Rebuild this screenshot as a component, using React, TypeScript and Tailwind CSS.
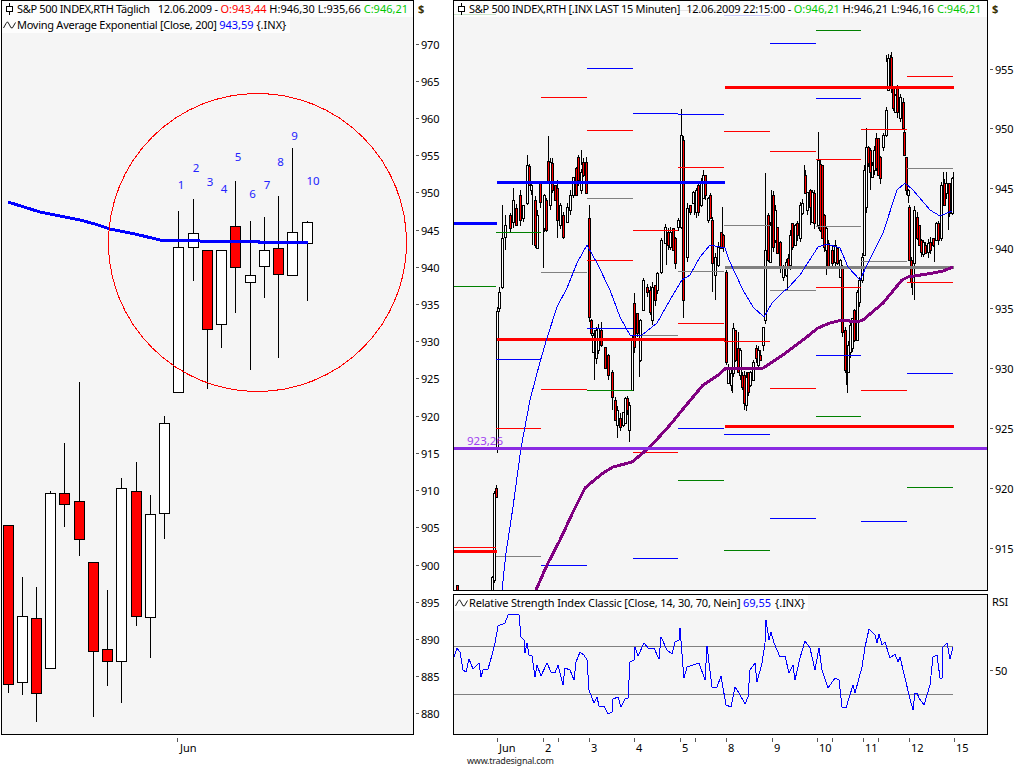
// S&P 500 daily and 15 minute charts, coordinates below are page pixels
type Candle = [number, number, number, number, number, 0 | 1];
type MiniBar = [number, number, number, 0 | 1];
type Pivot = [number, number, number, string, number?];

const RED = "#ff0000";
const BLUE = "#0000ff";
const GREEN = "#008000";
const GREY = "#808080";

// cx, wickTop, wickBottom, bodyTop, bodyBottom, red
const dailyCandles: Candle[] = [
  [8.5, 525, 693, 525, 684, 1],
  [22.5, 577, 695, 616, 682, 0],
  [36.5, 587, 722, 618, 693, 1],
  [50.5, 491, 668, 493, 668, 0],
  [64.5, 443, 527, 493, 504, 1],
  [79, 382, 556, 501, 539, 1],
  [93.5, 562, 717, 562, 651, 1],
  [107.5, 590, 686, 649, 661, 1],
  [121.5, 478, 703, 488, 661, 0],
  [136.5, 462, 626, 491, 616, 1],
  [150.5, 495, 658, 514, 617, 0],
  [164.5, 416, 539, 423, 513, 0],
  [178.5, 211, 392, 247, 392, 0],
  [193.5, 199, 281, 233, 247, 0],
  [207.5, 250, 389, 250, 329, 1],
  [221.5, 250, 348, 250, 324, 0],
  [235.5, 181, 313, 226, 267, 1],
  [250.5, 221, 370, 275, 282, 0],
  [264.5, 217, 298, 250, 266, 0],
  [278.5, 196, 358, 248, 274, 1],
  [292.5, 148, 275, 232, 275, 0],
  [307.5, 221, 301, 222, 243, 0],
];

const dailyNumbers: [string, number, number][] = [
  ["1", 181, 189],
  ["2", 196, 172],
  ["3", 210, 186],
  ["4", 224, 193],
  ["5", 238, 161],
  ["6", 252.5, 198],
  ["7", 267, 189],
  ["8", 280.5, 166],
  ["9", 294.5, 140],
  ["10", 313, 185],
];

const dailyEma = "8,202 24,207 40,212 60,216 80,220 95,224 110,229 135,234 160,240 200,241 258,241 259,242 308,242";

// x, bodyTop, bodyBottom, red
const bars: MiniBar[] = [
  [457, 585, 591, 1], [492, 577, 591, 0], [494, 493, 580, 0], [496, 488, 497, 1],
  [497, 311, 447, 0], [499, 292, 308, 0], [502, 238, 287, 0], [505, 225, 237, 0],
  [510, 215, 228, 1], [513, 200, 222, 0], [516, 208, 225, 1], [520, 195, 220, 1],
  [523, 205, 218, 0], [527, 165, 203, 0], [529, 166, 185, 1], [531, 185, 190, 0],
  [535, 200, 245, 1], [537, 215, 248, 0], [540, 183, 202, 1], [544, 195, 228, 0],
  [546, 200, 230, 1], [548, 161, 182, 1], [550, 162, 205, 0], [552, 163, 190, 1],
  [555, 185, 200, 1], [557, 188, 220, 1], [560, 205, 225, 0], [563, 215, 237, 1],
  [567, 207, 222, 0], [570, 195, 210, 0], [573, 177, 195, 0], [576, 168, 195, 1],
  [578, 157, 180, 1], [581, 172, 190, 0], [583, 162, 175, 1], [586, 162, 193, 1],
  [589, 218, 317, 1], [591, 320, 333, 1], [593, 335, 352, 0], [596, 330, 358, 0],
  [598, 328, 350, 0], [601, 330, 345, 1], [605, 347, 368, 1], [608, 355, 375, 1],
  [612, 372, 397, 1], [615, 400, 420, 1], [617, 410, 425, 0], [620, 418, 427, 1],
  [623, 412, 425, 0], [625, 398, 423, 0], [627, 398, 410, 1], [629, 405, 430, 0],
  [632, 340, 390, 0], [634, 303, 347, 1], [637, 313, 333, 1], [640, 320, 360, 0],
  [643, 280, 310, 0], [647, 287, 292, 1], [650, 290, 312, 1], [652, 287, 320, 0],
  [655, 285, 300, 1], [657, 273, 290, 0], [661, 240, 272, 0], [665, 227, 243, 0],
  [668, 232, 245, 1], [670, 232, 247, 0], [673, 228, 250, 1], [675, 238, 263, 1],
  [678, 220, 227, 0], [681, 135, 227, 0], [683, 140, 300, 1], [687, 208, 257, 0],
  [690, 205, 212, 1], [693, 192, 203, 0], [696, 190, 212, 0], [698, 185, 212, 1],
  [701, 182, 205, 0], [703, 175, 198, 0], [705, 175, 195, 1], [708, 198, 220, 0],
  [710, 195, 218, 1], [712, 220, 263, 1], [715, 257, 275, 0], [718, 247, 265, 0],
  [721, 232, 248, 1], [723, 235, 247, 1], [726, 272, 362, 1], [728, 367, 383, 0],
  [731, 373, 385, 0], [733, 328, 373, 0], [735, 330, 360, 1], [738, 348, 372, 1],
  [740, 350, 375, 0], [742, 375, 387, 1], [744, 375, 403, 1], [746, 377, 405, 0],
  [748, 372, 392, 1], [750, 372, 385, 0], [753, 362, 380, 0], [756, 348, 358, 1],
  [758, 350, 365, 0], [760, 355, 360, 1], [763, 327, 345, 0], [765, 250, 320, 0],
  [768, 215, 260, 1], [770, 225, 262, 0], [773, 195, 247, 1], [775, 210, 240, 0],
  [777, 227, 253, 1], [780, 242, 267, 1], [783, 267, 277, 0], [786, 262, 275, 0],
  [788, 258, 267, 1], [790, 235, 265, 0], [792, 223, 247, 1], [795, 225, 245, 0],
  [797, 223, 235, 1], [800, 205, 238, 0], [802, 203, 213, 0], [805, 175, 193, 1],
  [807, 192, 210, 0], [810, 190, 207, 1], [812, 192, 222, 0], [814, 193, 223, 1],
  [818, 160, 225, 0], [820, 164, 230, 1], [822, 165, 238, 1], [824, 215, 247, 1],
  [826, 228, 250, 0], [828, 243, 267, 1], [832, 250, 263, 1], [835, 245, 262, 0],
  [837, 248, 263, 1], [840, 260, 277, 0], [842, 267, 332, 1], [845, 330, 370, 1],
  [848, 345, 372, 0], [850, 325, 352, 0], [852, 318, 348, 0], [854, 310, 340, 1],
  [857, 292, 340, 0], [859, 280, 302, 0], [862, 257, 280, 0], [864, 170, 255, 0],
  [866, 147, 207, 0], [868, 147, 163, 1], [870, 150, 172, 1], [872, 165, 177, 0],
  [874, 150, 170, 0], [876, 138, 168, 1], [878, 138, 175, 1], [880, 157, 178, 1],
  [883, 135, 147, 0], [886, 110, 135, 0], [888, 58, 90, 0], [891, 57, 88, 1],
  [893, 88, 108, 1], [895, 95, 112, 0], [897, 87, 112, 1], [900, 97, 118, 0],
  [903, 102, 128, 1], [904, 132, 155, 1], [906, 157, 190, 1], [908, 190, 195, 0],
  [909, 207, 260, 1], [911, 260, 282, 1], [914, 210, 263, 0], [917, 217, 238, 1],
  [919, 225, 245, 1], [921, 240, 252, 1], [923, 242, 254, 0], [925, 245, 253, 1],
  [928, 243, 252, 0], [930, 242, 250, 1], [933, 238, 245, 1], [936, 223, 240, 0],
  [938, 223, 240, 1], [941, 185, 238, 0], [944, 183, 205, 1], [946, 183, 193, 0],
  [949, 183, 213, 1], [952, 178, 213, 0],
];

// long wicks read from the chart
const wicks: [number, number, number][] = [
  [502, 205, 240], [505, 215, 250], [513, 188, 228], [527, 155, 170], [532, 185, 245],
  [543, 198, 268], [548, 136, 165], [557, 180, 238], [581, 150, 165], [589, 205, 220],
  [594, 330, 380], [601, 322, 345], [612, 395, 410], [617, 418, 438], [629, 420, 442],
  [639, 350, 377], [634, 293, 305], [652, 315, 325], [666, 240, 265], [681, 109, 140],
  [683, 295, 318], [694, 195, 215], [715, 270, 300], [712, 255, 292], [722, 207, 240],
  [732, 380, 393], [738, 332, 350], [744, 400, 410], [765, 173, 255], [771, 190, 230],
  [787, 265, 290], [804, 165, 180], [810, 205, 225], [818, 132, 165], [826, 245, 275],
  [847, 365, 393], [846, 370, 385], [866, 128, 150], [870, 170, 190], [886, 55, 62],
  [890, 55, 60], [908, 190, 203], [914, 260, 300], [912, 280, 295], [934, 243, 262],
  [946, 172, 185], [948, 210, 230], [943, 172, 188], [953, 172, 180],
];

const pivots: Pivot[] = [
  // under the legend
  [453, 496, 14, GREEN], [678, 724, 10, GREY], [724, 770, 15, BLUE],
  [453, 496, 286, GREEN], [453, 496, 547, RED], [453, 496, 449, BLUE],
  [496, 541, 232, GREEN], [496, 541, 359, BLUE], [496, 541, 428, RED], [496, 541, 556, GREY],
  [541, 587, 97, RED], [541, 587, 272, GREY], [541, 587, 389, RED], [541, 587, 565, BLUE],
  [587, 633, 68, BLUE], [587, 633, 130, RED], [587, 633, 198, GREY], [587, 633, 260, RED],
  [587, 633, 328, BLUE], [587, 633, 390, GREEN],
  [633, 678, 113, BLUE], [633, 678, 230, RED], [633, 678, 335, GREY], [633, 678, 452, RED],
  [633, 678, 558, BLUE],
  [678, 724, 114, BLUE], [678, 724, 167, RED], [678, 724, 271, GREY], [678, 724, 323, RED],
  [678, 724, 428, BLUE], [678, 724, 480, GREEN],
  [724, 770, 131, RED], [724, 770, 225, GREY], [724, 770, 341, RED], [724, 770, 434, BLUE],
  [724, 770, 550, GREEN],
  [770, 816, 43, BLUE], [770, 816, 151, RED], [770, 816, 290, GREY], [770, 816, 388, RED],
  [770, 816, 518, BLUE],
  [816, 861, 30, GREEN], [816, 861, 98, BLUE], [816, 861, 159, RED], [816, 861, 226, GREY],
  [816, 861, 287, RED], [816, 861, 355, BLUE], [816, 861, 416, GREEN],
  [861, 907, 129, RED], [861, 907, 261, GREY], [861, 907, 390, RED], [861, 907, 521, BLUE],
  [907, 953, 76, RED], [907, 953, 168, GREY], [907, 953, 282, RED], [907, 953, 373, BLUE],
  [907, 953, 487, GREEN],
];

const thickLines: Pivot[] = [
  [453, 497, 223, BLUE, 3], [497, 725, 182, BLUE, 3],
  [453, 497, 551, RED, 3], [497, 725, 339, RED, 3],
  [725, 954, 87, RED, 3], [725, 954, 426, RED, 3], [725, 954, 267, GREY, 3],
];

const maPath =
  "502,590 506,553 513,507 521,448 530,400 540,362 547,338 557,307 567,288 577,263 587,245 597,263 610,290 620,317 630,335 642,335 657,323 670,300 682,280 690,275 700,257 710,245 725,248 729,260 743,290 753,307 764,317 772,303 783,292 788,288 800,275 818,247 827,244 840,248 848,267 860,280 868,263 883,233 897,190 905,183 913,190 930,210 940,216 952,211";

const emaPath =
  "536,590 547,565 560,540 573,512 585,488 592,482 603,473 613,467 632,462 650,447 670,425 683,409 703,385 717,376 725,369 763,368 780,357 803,340 818,328 830,323 842,320 857,322 863,320 883,303 902,280 908,277 933,273 943,271 953,267";

const rsiPath =
  "454,657 457,648 460,652 463,670 466,672 469,659 473,669 479,663 481,677 483,670 488,669 492,655 495,643 498,626 505,623 508,615 512,614 519,615 521,637 524,640 525,653 527,643 529,655 532,656 535,677 537,665 541,676 547,663 551,672 555,673 558,665 563,685 565,668 570,670 574,680 576,662 580,652 584,655 587,660 589,690 594,703 597,697 599,706 604,706 608,714 612,712 613,699 618,697 621,707 625,699 628,698 630,662 634,660 635,647 638,656 644,643 649,649 654,648 659,659 661,637 667,650 672,654 675,642 679,640 680,628 683,667 684,678 687,667 699,663 705,680 707,646 712,687 717,687 721,676 726,705 731,707 735,687 739,693 745,704 748,697 750,670 755,663 757,682 762,663 765,643 766,620 769,640 771,632 774,643 780,657 785,656 789,673 793,665 795,680 800,658 805,641 810,648 815,670 819,648 822,670 828,688 835,678 839,680 842,707 846,708 853,685 855,693 862,667 865,647 869,629 875,635 877,643 879,634 882,645 885,642 890,658 895,654 898,662 900,657 905,678 909,695 913,710 915,693 917,693 919,698 924,705 930,685 933,657 937,655 940,678 942,678 943,647 947,643 950,659 953,647";

const dailyAxis = [970, 965, 960, 955, 950, 945, 940, 935, 930, 925, 920, 915, 910, 905, 900, 895, 890, 885, 880];
const intradayAxis = [955, 950, 945, 940, 935, 930, 925, 920, 915];

// tick position and label of the lower time axis
const timeTicks: [number, string][] = [
  [497, "Jun"], [543, "2"], [558, ""], [589, "3"], [634, "4"], [680, "5"], [695, ""],
  [726, "8"], [772, "9"], [817, "10"], [832, ""], [863, "11"], [878, ""], [909, "12"], [954, "15"],
];

function CandleIcon() {
  return (
    <svg width="7" height="12" viewBox="0 0 7 12" shapeRendering="crispEdges" className="block">
      <path d="M3.5 0V12" stroke="#000" />
      <rect x="0.5" y="3.5" width="6" height="5" fill="#fff" stroke="#000" />
    </svg>
  );
}

function WaveIcon() {
  return (
    <svg width="13" height="8" viewBox="0 0 13 8" className="block">
      <path d="M0.5 7L3 2.5L4.5 0.8L6 3L8 6.8L9.5 6.8L12.5 1.5" fill="none" stroke="#000" strokeWidth="0.9" />
    </svg>
  );
}

function Legend({ icon, children, className }: { icon: React.ReactNode; children: React.ReactNode; className: string }) {
  return (
    <div className={`flex h-4 items-center whitespace-pre bg-white/80 text-[11px] text-black ${className}`}>
      <span className="flex w-[15px] shrink-0 justify-center">{icon}</span>
      {children}
    </div>
  );
}

function PriceAxis({ values, className }: { values: number[]; className: string }) {
  return (
    <div className={`flex flex-col justify-between ${className}`}>
      {values.map((v) => (
        <div key={v} className="flex h-[14px] items-center text-[11px] leading-none tracking-[-0.17px] text-black">
          <span className="mr-[2px] h-px w-[3px] bg-[#555]" />
          {v}
        </div>
      ))}
    </div>
  );
}

function DailyChart() {
  return (
    <svg width="411" height="733" viewBox="2 1 411 733" shapeRendering="crispEdges" className="block">
      {dailyCandles.map(([cx, wt, wb, bt, bb, red]) => {
        const x = Math.floor(cx);
        return (
          <g key={cx}>
            <line x1={x + 0.5} x2={x + 0.5} y1={wt} y2={wb} stroke="#000" />
            <rect x={x - 4.5} y={bt + 0.5} width={10} height={bb - bt} fill={red ? RED : "#fff"} stroke="#000" />
          </g>
        );
      })}
      <polyline points={dailyEma} fill="none" stroke={BLUE} strokeWidth="3" />
      <circle cx="257.5" cy="242.5" r="149" fill="none" stroke={RED} />
      {dailyNumbers.map(([t, x, y]) => (
        <text key={t} x={x} y={y} fill="#2222ff" fontSize="11.5" textAnchor="middle" fontFamily="'Noto Sans', sans-serif">
          {t}
        </text>
      ))}
    </svg>
  );
}

function IntradayChart() {
  return (
    <svg width="533" height="589" viewBox="454 1 533 589" shapeRendering="crispEdges" className="block">
      {wicks.map(([x, a, b], i) => (
        <line key={i} x1={x + 0.5} x2={x + 0.5} y1={a} y2={b} stroke="#000" />
      ))}
      {bars.map(([x, top, bottom, red], i) => (
        <g key={i}>
          <line x1={x + 0.5} x2={x + 0.5} y1={top - ((i * 7) % 6)} y2={bottom + ((i * 5) % 7)} stroke="#000" />
          <rect x={x - 0.5} y={top + 0.5} width={2} height={bottom - top} fill={red ? RED : "#fff"} stroke="#000" />
        </g>
      ))}
      {pivots.map(([a, b, y, color], i) => (
        <line key={i} x1={a} x2={b} y1={y + 0.5} y2={y + 0.5} stroke={color} />
      ))}
      {thickLines.map(([a, b, y, color, w], i) => (
        <line key={i} x1={a} x2={b} y1={y + 0.5} y2={y + 0.5} stroke={color} strokeWidth={w} />
      ))}
      <polyline points={maPath} fill="none" stroke={BLUE} />
      <polyline points={emaPath} fill="none" stroke="#800080" strokeWidth="3" />
      <line x1="454" x2="987" y1="448.5" y2="448.5" stroke="#8a2be2" strokeWidth="3" />
      <text x="467" y="445" fill="#a040f0" fontSize="11.5" fontFamily="'Noto Sans', sans-serif">
        923,26
      </text>
    </svg>
  );
}

function RsiChart() {
  return (
    <svg width="533" height="139" viewBox="454 595 533 139" shapeRendering="crispEdges" className="block">
      <line x1="454" x2="953" y1="646.5" y2="646.5" stroke={GREY} />
      <line x1="454" x2="953" y1="694.5" y2="694.5" stroke={GREY} />
      <polyline points={rsiPath} fill="none" stroke={BLUE} />
    </svg>
  );
}

export default function App() {
  return (
    <div className="flex h-[768px] w-[1024px] overflow-hidden bg-white font-['Noto_Sans',sans-serif]">
      {/* daily chart */}
      <div className="ml-px flex w-[452px] shrink-0 flex-col">
        <div className="flex h-[735px]">
          <div className="relative h-[735px] w-[413px] shrink-0 border border-black bg-[#f5f5f5]">
            <DailyChart />
            <div className="absolute left-0 top-0 w-full">
              <Legend icon={<CandleIcon />} className="w-full">
                <span className="tracking-[-0.33px]">S&amp;P 500 INDEX,RTH Täglich</span>
                <span className="ml-2 tracking-[-0.2px]">12.06.2009 - </span>
                <span className="text-[#ff0000]">O:943,44 </span>
                <span>H:946,30 L:935,66 </span>
                <span className="text-[#00c800]">C:946,21</span>
              </Legend>
              <Legend icon={<WaveIcon />} className="w-[288px]">
                <span className="tracking-[-0.27px]">Moving Average Exponential [Close, 200] </span>
                <span className="text-[#0000ff]">943,59 </span>
                <span>{"{.INX}"}</span>
              </Legend>
            </div>
          </div>
          <div className="flex flex-col pl-[2px]">
            <span className="ml-[2px] mt-[2px] text-[11px] font-bold leading-[14px] text-[#3a3000]">$</span>
            <PriceAxis values={dailyAxis} className="mt-[21px] h-[684px]" />
          </div>
        </div>
        <div className="ml-[176px] mt-[3px] flex items-start">
          <span className="h-[4px] w-px bg-[#555]" />
          <span className="mt-[3px] pl-[2px] text-[11px] leading-[14px] text-black">Jun</span>
        </div>
      </div>

      {/* 15 minute chart with RSI */}
      <div className="flex grow flex-col">
        <div className="flex h-[591px]">
          <div className="relative w-[535px] shrink-0 border border-black bg-[#f5f5f5]">
            <IntradayChart />
            <div className="absolute left-0 top-0 w-full">
              <Legend icon={<CandleIcon />} className="w-full">
                <span className="tracking-[-0.3px]">S&amp;P 500 INDEX,RTH [.INX LAST 15 Minuten]</span>
                <span className="ml-[6px] tracking-[-0.2px]">12.06.2009 22:15:00 - </span>
                <span className="text-[#00c800]">O:946,21 </span>
                <span>H:946,21 L:946,16 </span>
                <span className="text-[#00c800]">C:946,21</span>
              </Legend>
            </div>
          </div>
          <div className="flex flex-col pl-[2px]">
            <span className="ml-[2px] mt-[2px] text-[11px] font-bold leading-[14px] text-[#3a3000]">$</span>
            <PriceAxis values={intradayAxis} className="mt-[46px] h-[493px]" />
          </div>
        </div>
        <div className="mt-[3px] flex h-[141px]">
          <div className="relative w-[535px] shrink-0 border border-black bg-[#f5f5f5]">
            <RsiChart />
            <div className="absolute left-0 top-0">
              <Legend icon={<WaveIcon />} className="w-[354px]">
                <span className="tracking-[-0.17px]">Relative Strength Index Classic [Close, 14, 30, 70, Nein] </span>
                <span className="text-[#0000ff]">69,55 </span>
                <span className="ml-px">{"{.INX}"}</span>
              </Legend>
            </div>
          </div>
          <div className="flex flex-col pl-[2px]">
            <span className="ml-[2px] mt-px text-[11px] leading-[14px] tracking-[-0.17px] text-black">RSI</span>
            <PriceAxis values={[50]} className="mt-[54px]" />
          </div>
        </div>
        <div className="mt-[3px] flex h-[18px] items-start">
          {timeTicks.map(([x, label], i) => {
            const next = timeTicks[i + 1]?.[0] ?? x + 30;
            return (
              <div key={x} className="flex shrink-0 items-start" style={{ width: next - x, marginLeft: i === 0 ? x - 453 : 0 }}>
                <span className="h-[4px] w-px shrink-0 bg-[#555]" />
                {label && <span className="mt-[3px] pl-px text-[11px] leading-[14px] text-black">{label}</span>}
              </div>
            );
          })}
        </div>
        <div className="mt-[-1px] pl-[14px] text-[9px] leading-[12px] tracking-[-0.25px] text-[#222]">www.tradesignal.com</div>
      </div>
    </div>
  );
}
